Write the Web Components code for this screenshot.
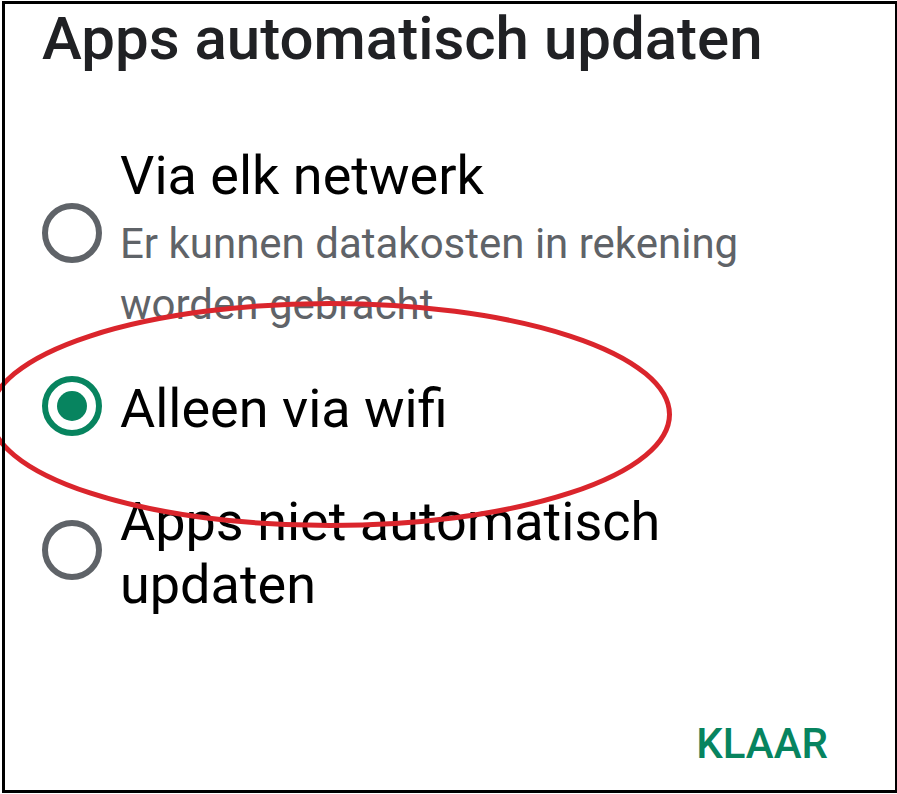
<!DOCTYPE html>
<html lang="nl">
<head>
<meta charset="utf-8">
<meta name="viewport" content="width=device-width, initial-scale=1">
<title>Apps automatisch updaten</title>
<style>
    body {
        margin: 0;
        background: #fff;
        font-family: Roboto, "Liberation Sans", sans-serif;
        --accent: #07845f;
        --muted: #5f6368;
    }
</style>
</head>
<body>
<update-dialog>
    <span slot="title">Apps automatisch updaten</span>
    <radio-list label="Apps automatisch updaten">
        <radio-option value="any">
            Via elk netwerk
            <span slot="note">Er kunnen datakosten in rekening worden gebracht</span>
        </radio-option>
        <radio-option value="wifi" checked>Alleen via wifi</radio-option>
        <radio-option value="never">Apps niet automatisch updaten</radio-option>
    </radio-list>
    <text-button slot="actions">Klaar</text-button>
    <marker-ring slot="marker"></marker-ring>
</update-dialog>

<script>
class UpdateDialog extends HTMLElement {
    constructor() {
        super();
        this.attachShadow({mode: 'open'});
        this.shadowRoot.innerHTML = `
        <style>
            :host {
                display: flex;
                box-sizing: border-box;
                min-height: 100vh;
                padding: 1px 0 1px 2px;
                position: relative;
                overflow: hidden;
            }
            section {
                flex: 1;
                display: flex;
                flex-direction: column;
                box-sizing: border-box;
                padding: 3px 69px 24px 40px;
            }
            /* The frame is drawn over the marker, which runs off the left edge. */
            :host::after {
                content: "";
                position: absolute;
                inset: 1px 0 1px 2px;
                border: 3px solid #000;
                border-right-width: 2px;
                pointer-events: none;
            }
            h1 {
                margin: 0 0 56px;
                color: #202124;
                font-size: 60px;
                font-weight: 500;
                line-height: 70px;
            }
            footer {
                display: flex;
                justify-content: flex-end;
                margin-top: auto;
                padding-top: 24px;
            }
        </style>
        <section role="dialog" aria-labelledby="title">
            <h1 id="title"><slot name="title"></slot></h1>
            <slot></slot>
            <footer><slot name="actions"></slot></footer>
        </section>
        <slot name="marker"></slot>
        `;
    }
}

class RadioList extends HTMLElement {
    constructor() {
        super();
        this.attachShadow({mode: 'open'});
        this.shadowRoot.innerHTML = `
        <style>
            :host {
                display: block;
            }
        </style>
        <slot></slot>
        `;
    }

    connectedCallback() {
        this.setAttribute('role', 'radiogroup');
        this.setAttribute('aria-label', this.getAttribute('label') || '');
        this.addEventListener('option-select', this._select.bind(this));
    }

    // Every input sits in its own shadow root, so the browser does not group them by name.
    _select(event) {
        this.querySelectorAll('radio-option').forEach(option => {
            option.checked = option === event.target;
        });
    }
}

class RadioOption extends HTMLElement {
    constructor() {
        super();
        this.attachShadow({mode: 'open'});
        this.shadowRoot.innerHTML = `
        <style>
            :host {
                display: block;
                margin-bottom: 44px;
            }
            :host(.noted) {
                margin-bottom: 36px;
            }
            label {
                display: flex;
                align-items: center;
                gap: 18px;
                cursor: pointer;
            }
            input {
                appearance: none;
                flex: none;
                display: grid;
                place-items: center;
                box-sizing: border-box;
                width: 60px;
                height: 60px;
                margin: 0;
                border: 6px solid var(--muted);
                border-radius: 50%;
            }
            input:checked {
                border-color: var(--accent);
            }
            input:checked::before {
                content: "";
                width: 30px;
                height: 30px;
                border-radius: 50%;
                background: var(--accent);
            }
            .text {
                padding-top: 6px;
                color: #000;
                font-size: 54px;
                line-height: 63px;
            }
            :host(.noted) .text {
                padding-top: 14px;
            }
            .note {
                display: none;
                margin-top: 6px;
                color: var(--muted);
                font-size: 42px;
                line-height: 61px;
            }
            :host(.noted) .note {
                display: block;
            }
        </style>
        <label>
            <input type="radio">
            <span class="text">
                <slot></slot>
                <span class="note"><slot name="note"></slot></span>
            </span>
        </label>
        `;
        this._input = this.shadowRoot.querySelector('input');
    }

    connectedCallback() {
        this._input.value = this.getAttribute('value');
        this._input.checked = this.hasAttribute('checked');
        this.classList.toggle('noted', !!this.querySelector('[slot=note]'));
        this._input.addEventListener('change', () => {
            this.dispatchEvent(new CustomEvent('option-select', {bubbles: true}));
        });
    }

    set checked(value) {
        this._input.checked = value;
    }
}

class TextButton extends HTMLElement {
    constructor() {
        super();
        this.attachShadow({mode: 'open'});
        this.shadowRoot.innerHTML = `
        <style>
            :host {
                display: block;
            }
            button {
                display: block;
                padding: 0;
                border: 0;
                background: none;
                color: var(--accent);
                font: 500 42px/50px Roboto, "Liberation Sans", sans-serif;
                text-transform: uppercase;
                cursor: pointer;
            }
        </style>
        <button type="button"><slot></slot></button>
        `;
    }
}

// Hand-drawn style ellipse laid over the chosen option.
class MarkerRing extends HTMLElement {
    constructor() {
        super();
        this.attachShadow({mode: 'open'});
        this.shadowRoot.innerHTML = `
        <style>
            :host {
                position: absolute;
                top: 301px;
                left: -12px;
                pointer-events: none;
            }
            svg {
                display: block;
            }
        </style>
        <svg width="684" height="227" viewBox="0 0 684 227" fill="none" aria-hidden="true">
            <ellipse cx="342" cy="113.5" rx="339.5" ry="111" stroke="#da252c" stroke-width="5"/>
        </svg>
        `;
    }
}

customElements.define('update-dialog', UpdateDialog);
customElements.define('radio-list', RadioList);
customElements.define('radio-option', RadioOption);
customElements.define('text-button', TextButton);
customElements.define('marker-ring', MarkerRing);
</script>
</body>
</html>
